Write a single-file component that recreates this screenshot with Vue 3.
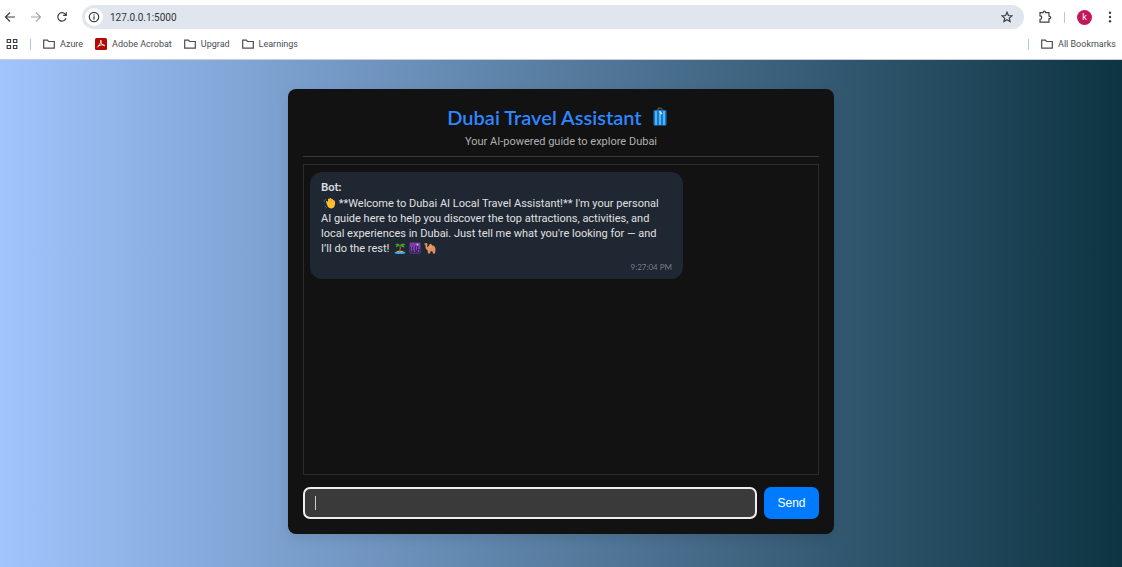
<script setup>
import { ref } from 'vue'

const draft = ref('')
const bookmarks = ['Azure', 'Adobe Acrobat', 'Upgrad', 'Learnings']
</script>

<template>
  <div class="window">
    <header class="chrome">
      <div class="toolbar">
        <button class="tool" aria-label="Back">
          <svg width="12" height="12" viewBox="0 0 12 12"><path d="M6 1.500 1.500 6 6 10.500M1.500 6H11" /></svg>
        </button>
        <button class="tool faded" aria-label="Forward">
          <svg width="12" height="12" viewBox="0 0 12 12"><path d="M6 1.500 10.500 6 6 10.500M10.500 6H1" /></svg>
        </button>
        <button class="tool" aria-label="Reload">
          <svg width="12" height="12" viewBox="0 0 12 12"><path d="M10 7.200A4.200 4.200 0 1 1 9.200 3.200L10.200 4.300M10.300 1.200V4.400H7.100" /></svg>
        </button>
        <div class="omnibox">
          <button class="info" aria-label="Site information">
            <svg width="12" height="12" viewBox="0 0 12 12"><circle cx="6" cy="6" r="4.700" /><path d="M6 5.300V8.700M6 3.200V4.400" /></svg>
          </button>
          <input class="url" aria-label="Address" value="127.0.0.1:5000" />
          <button class="star" aria-label="Bookmark this page">
            <svg width="12" height="12" viewBox="0 0 12 12"><path d="M6 1.200 7.400 4.500 11 4.800 8.300 7.100 9.100 10.600 6 8.800 2.900 10.600 3.700 7.100 1 4.800 4.600 4.500Z" /></svg>
          </button>
        </div>
        <div class="actions">
          <button class="tool ext" aria-label="Extensions">
            <svg width="14" height="14" viewBox="0 0 14 14"><path d="M2 2.700H5.200V2.400A1.200 1.200 0 0 1 7.600 2.400V2.700H11V6.200H11.400A1.200 1.200 0 0 1 11.400 8.600H11V12.200H2V9.400A1.800 1.800 0 0 0 2 5.800Z" /></svg>
          </button>
          <span class="bar"></span>
          <button class="avatar" aria-label="Profile">k</button>
          <button class="tool" aria-label="Menu">
            <svg class="solid" width="12" height="12" viewBox="0 0 12 12"><circle cx="6" cy="1.700" r="1.200" /><circle cx="6" cy="6" r="1.200" /><circle cx="6" cy="10.300" r="1.200" /></svg>
          </button>
        </div>
      </div>
      <nav class="bookmarks">
        <button class="tool" aria-label="Apps">
          <svg width="12" height="12" viewBox="0 0 12 12"><path d="M1.200 1.500H4.500V4.500H1.200ZM7.500 1.500H10.800V4.500H7.500ZM1.200 7.500H4.500V10.500H1.200ZM7.500 7.500H10.800V10.500H7.500Z" /></svg>
        </button>
        <span class="bar"></span>
        <a v-for="name in bookmarks" :key="name" href="#">
          <svg v-if="name === 'Adobe Acrobat'" class="adobe" width="12" height="12" viewBox="0 0 12 12"><rect width="12" height="12" rx="1.500" /><path d="M5.700 2.300C6.600 2.200 6 4.900 2.500 9.300M5.600 2.300C5.200 4.200 7.500 7.600 9.700 7.900M3.500 7.800C5.500 6.700 8 6.600 9.700 7.300" /></svg>
          <svg v-else width="12" height="12" viewBox="0 0 12 12"><path d="M.7 2.200H4.400L5.600 3.500H11.300V10.200H.7Z" /></svg>
          {{ name }}
        </a>
        <span class="bar last"></span>
        <a href="#">
          <svg width="12" height="12" viewBox="0 0 12 12"><path d="M.7 2.200H4.400L5.600 3.500H11.300V10.200H.7Z" /></svg>
          All Bookmarks
        </a>
      </nav>
    </header>

    <main class="page">
      <section class="card">
        <div class="heading">
          <h1>
            Dubai Travel Assistant
            <svg width="14" height="20" viewBox="0 0 14 20">
              <path d="M5 4V2Q5 1 7 1T9 2V4" fill="none" stroke="#59616b" stroke-width="1.200" />
              <rect x=".5" y="3" width="13" height="15.500" rx="1.500" fill="#1976c4" />
              <path d="M3 4V18M7 4V18M11 4V18" stroke="#49b5f4" stroke-width="2" />
              <path d="M6 3.500 8 4.500 9.500 7 7.500 7.500Z" fill="#d8dde4" />
              <path d="M1 18.500H4M10 18.500H13" stroke="#174d7e" />
            </svg>
          </h1>
          <p>Your AI-powered guide to explore Dubai</p>
        </div>
        <div class="log">
          <article class="bubble">
            <strong>Bot:</strong>
            <p>
              <svg class="wave" width="13" height="12" viewBox="0 0 13 12">
                <path d="M3.500 6.500 3 4.200Q3.500 3.400 4.200 4.200L5 5 5 2Q5.700 1 6.300 2L6.800 1.200Q7.700.6 8.200 1.600L8.800 2Q9.700 1.700 10 2.800L10.600 3.300Q11.500 3 11.800 4.200Q12.800 8.500 10.500 10.700Q7.500 12.500 5 10Z" fill="#fdbd2e" />
                <path d="M6.300 2.500 7.500 5.500M8.200 2.300 9 5" stroke="#e59a1d" stroke-width=".6" />
                <path d="M1 5Q1.200 3 3 2M2 8.500Q2.500 10.500 4 11" stroke="#27679d" fill="none" />
              </svg>
              **Welcome to Dubai AI Local Travel Assistant!** I'm your personal<br />
              AI guide here to help you discover the top attractions, activities, and<br />
              local experiences in Dubai. Just tell me what you're looking for — and<br />
              I’ll do the rest!
              <span class="emoji">
                <svg width="12" height="12" viewBox="0 0 12 12">
                  <ellipse cx="6" cy="10.700" rx="5.500" ry="1.300" fill="#36a8e8" />
                  <path d="M2 10Q6 7.500 10 10Z" fill="#f4bd5a" />
                  <path d="M6 3Q7 6 5.500 9.500" stroke="#a7572d" stroke-width="1.300" fill="none" />
                  <path d="M6 3Q3 0 1 3L3 2.800Q1.500 4 2 5.500L6 3Q9 6 10.500 5.500 10.500 4 9 3.500L11.500 3Q9 0 6 3L4 .5Z" fill="#42a52a" />
                </svg>
                <svg width="12" height="12" viewBox="0 0 12 12">
                  <rect x=".5" y=".5" width="11" height="11" rx="1" fill="#7a3cad" />
                  <path d="M1 11V5H4V8H6V4H9V7H11V11Z" fill="#3c256b" />
                  <circle cx="8.500" cy="2.500" r="1" fill="#e5b0d5" />
                  <path d="M2 6H3M2 8H3M7 5H8M7 7H8M9 9H10M5 9H6" stroke="#d27bc3" />
                </svg>
                <svg width="12" height="12" viewBox="0 0 12 12">
                  <path d="M.5 1.500 3 1 3.500 2.500 3 4.500 4 5 5.500 2.500Q6.500 1 7.500 2.500L8.500 3.500Q11.500 3.500 11.500 8L11 11.500H9L8.500 9.500 7.500 9 6.500 9.500 6 11.500H4L3.500 8Q1 7 1.500 3.200L.5 2.700Z" fill="#df925f" />
                  <path d="M5.500 5Q6.500 4 7.500 5" stroke="#f6c08c" fill="none" />
                </svg>
              </span>
            </p>
            <time>9:27:04 PM</time>
          </article>
        </div>
        <form class="composer" @submit.prevent>
          <label class="field">
            <input v-model="draft" aria-label="Message" />
          </label>
          <button class="send">Send</button>
        </form>
      </section>
    </main>
  </div>
</template>

<style>
body { margin: 0; }
</style>

<style scoped>
* { box-sizing: border-box; }
.window {
  min-height: 100vh;
  display: flex;
  flex-direction: column;
  font-family: Roboto, "Noto Sans", sans-serif;
}
button, input { font: inherit; border: 0; margin: 0; padding: 0; background: none; color: inherit; outline: none; }
svg { flex: none; fill: none; stroke: currentColor; stroke-width: 1.2; }
.heading svg, .bubble svg { stroke: none; stroke-width: 1; }
.chrome { background: #fff; color: #3c4043; font-size: 9px; height: 60px; border-bottom: 1px solid #c3d0dc; }
.toolbar { display: flex; align-items: center; gap: 14px; height: 34px; padding: 0 6px 0 4px; }
.actions { display: flex; align-items: center; gap: 12px; }
.tool { display: flex; justify-content: center; align-items: center; width: 12px; flex: none; }
.faded { color: #a3a6a9; }
.solid { fill: currentColor; stroke: none; }
.omnibox { flex: 1; display: flex; align-items: center; height: 24px; border-radius: 12px; background: #e1e6ee; padding: 0 11px 0 3px; }
.info { display: flex; align-items: center; justify-content: center; width: 18px; height: 18px; border-radius: 50%; background: #fff; }
.url { flex: 1; min-width: 0; margin-left: 7px; font-size: 10px; color: #30343a; }
.star { display: flex; }
.ext { width: 14px; }
.bar { width: 1px; height: 11px; background: #a9c8fa; flex: none; }
.avatar { width: 15px; height: 15px; line-height: 15px; border-radius: 50%; background: #c2185b; color: #fff; text-align: center; flex: none; }
.bookmarks { display: flex; align-items: center; height: 20px; gap: 12px; padding: 0 6px; }
.bookmarks a { display: flex; align-items: center; gap: 5px; color: #4a4e53; text-decoration: none; white-space: nowrap; }
.adobe { stroke: #fff; stroke-width: 1; }
.adobe rect { fill: #b30b00; stroke: none; }
.last { margin-left: auto; }
.page { flex: 1; display: flex; justify-content: center; align-items: flex-start; padding: 29px 16px 32px; background: linear-gradient(to right, #a1c4fd, #0d3442); }
.card { width: 546px; max-width: 100%; padding: 15px; border-radius: 8px; background: #121212; color: #e0e0e0; box-shadow: 0 4px 12px rgba(0, 0, 0, 0.1); font-family: Lato, "Open Sans", sans-serif; }
.heading { text-align: center; border-bottom: 1px solid #3a3a3a; padding-bottom: 6px; margin-bottom: 7px; }
h1 { display: flex; justify-content: center; align-items: center; gap: 11px; margin: 0; padding-right: 8px; font-size: 20px; line-height: 26px; font-weight: 600; color: #2f86ff; }
.heading p { margin: 0; padding-top: 4px; font-family: Roboto, sans-serif; font-size: 11px; line-height: 16px; color: #b0b0b0; }
.log { min-height: 311px; border: 1px solid #2c2c2c; padding: 7px 6px; }
.bubble { width: 373px; max-width: 100%; border-radius: 12px; background: #1f2733; padding: 7px 11px 6px; font-size: 11px; line-height: 15px; }
.bubble strong { display: block; line-height: 16px; }
.bubble p { margin: 0; padding-top: 1px; font-family: Roboto, sans-serif; }
.bubble svg { vertical-align: -2px; }
.wave { margin-left: 2px; }
.emoji { display: inline-flex; gap: 3px; margin-left: 2px; vertical-align: -2px; }
time { display: block; text-align: right; font-size: 8px; line-height: 12px; margin-top: 5px; color: #777d85; }
.composer { display: flex; gap: 7px; margin-top: 12px; }
.field { position: relative; flex: 1; display: flex; }
.field::after { content: ""; position: absolute; left: 12px; top: 9px; width: 1px; height: 14px; background: #ccc; }
.field input { flex: 1; min-width: 0; height: 32px; padding: 0 12px; border: 2px solid #eee; border-radius: 7px; background: #3a3a3a; font-size: 12px; }
.send { width: 55px; height: 32px; border-radius: 7px; background: #007bff; color: #fff; font-family: "Liberation Sans", Arial, sans-serif; font-size: 12px; }
</style>
